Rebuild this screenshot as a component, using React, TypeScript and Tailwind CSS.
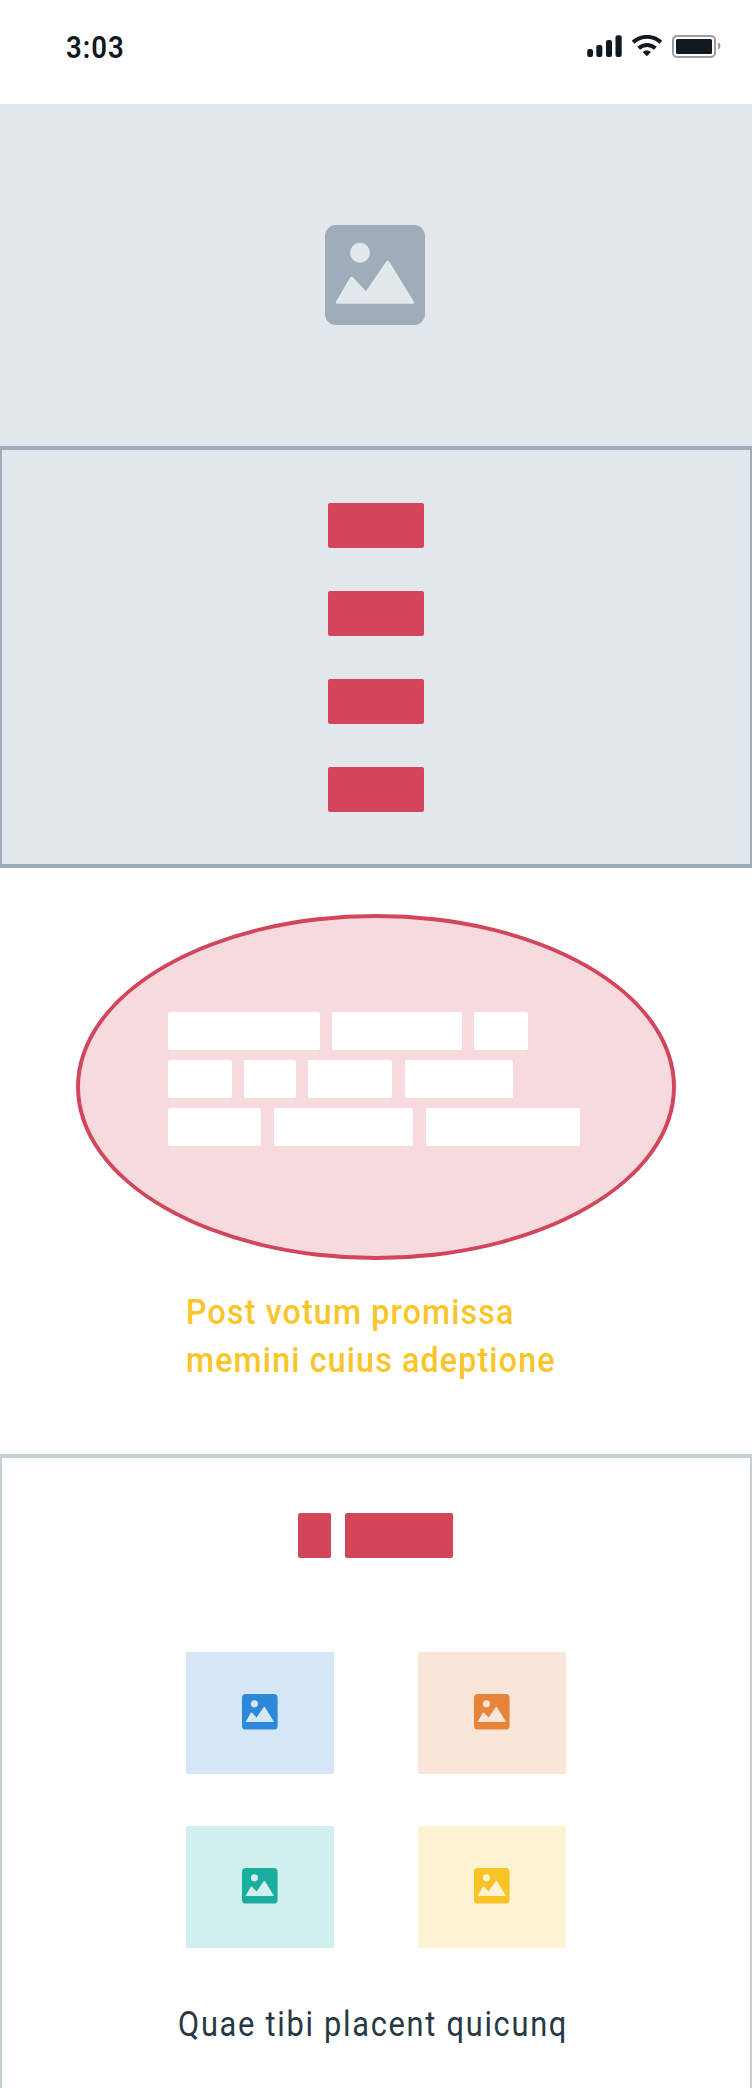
import type { ReactNode } from "react";

function PictureIcon({ className }: { className: string }) {
  return (
    <svg viewBox="0 0 100 100" className={className} fill="currentColor" aria-hidden="true">
      <path
        fillRule="evenodd"
        d="M11 0H89A11 11 0 0 1 100 11V89A11 11 0 0 1 89 100H11A11 11 0 0 1 0 89V11A11 11 0 0 1 11 0ZM35 17.7A10 10 0 1 0 35 37.7A10 10 0 1 0 35 17.7ZM25.3 52.3L11 76.5Q10 78.7 12.3 78.7H87.7Q90 78.7 88.8 76.5L64.2 36.6Q62.7 34.8 61.2 36.6L40.9 66.3L28.3 52.6Q26.8 51 25.3 52.3Z"
      />
    </svg>
  );
}

function SignalIcon() {
  return (
    <svg width="36" height="24" viewBox="0 0 36 24" fill="#101820" aria-hidden="true">
      <rect x="0.2" y="14" width="5.8" height="8" rx="2" />
      <rect x="9.3" y="10" width="6" height="12" rx="2" />
      <rect x="19" y="5" width="6" height="17" rx="2" />
      <rect x="28.5" y="0.3" width="6.2" height="21.7" rx="2" />
    </svg>
  );
}

function WifiIcon() {
  return (
    <svg width="30" height="24" viewBox="0 0 30 24" fill="none" stroke="#101820" aria-hidden="true">
      <path d="M1.2 7.2A20.5 20.5 0 0 1 28.8 7.2" strokeWidth="4" />
      <path d="M6.7 13.2A12.2 12.2 0 0 1 23.3 13.2" strokeWidth="4" />
      <path d="M10.6 16.9Q14.8 13.6 19 16.9L14.8 21.2Z" fill="#101820" stroke="none" />
    </svg>
  );
}

function BatteryIcon() {
  return (
    <svg width="49" height="24" viewBox="0 0 49 24" aria-hidden="true">
      <rect x="1" y="1" width="42" height="21" rx="4" fill="none" stroke="#9f9b9e" strokeWidth="2" />
      <rect x="4" y="4" width="36" height="15" rx="1.5" fill="#101820" />
      <path d="M46 7Q48.5 8.5 48.5 11T46 15Z" fill="#9f9b9e" />
    </svg>
  );
}

function StatusBar() {
  return (
    <header className="flex h-[104px] shrink-0 items-start justify-between bg-white pt-[27px] pr-[31px] pl-[66px]">
      <span className="inline-block origin-left scale-x-[0.86] text-[32px] leading-[40px] font-semibold tracking-[1.2px] text-[#101820]">
        3:03
      </span>
      <div className="flex pt-2">
        <SignalIcon />
        <div className="pr-[10px] pl-[9px]">
          <WifiIcon />
        </div>
        <BatteryIcon />
      </div>
    </header>
  );
}

function Tile({ className }: { className: string }) {
  return (
    <div className={`flex h-[122px] w-[148px] items-center justify-center pb-[2px] ${className}`}>
      <PictureIcon className="size-[35.6px]" />
    </div>
  );
}

function BrickRow({ children }: { children: ReactNode }) {
  return <div className="flex h-[38px]">{children}</div>;
}

export default function App() {
  return (
    <main className="flex h-[2088px] w-[752px] flex-col overflow-hidden bg-white font-['Roboto',sans-serif]">
      <StatusBar />

      <section className="flex h-[342px] shrink-0 justify-center bg-[#e2e8eb] pt-[121px] pr-[2px]">
        <PictureIcon className="size-[100px] text-[#9eadb9]" />
      </section>

      <section className="flex h-[422px] shrink-0 flex-col items-center gap-[43px] border-x-2 border-y-4 border-[#9eadbb] bg-[#e2e8eb] pt-[53px]">
        <div className="h-[45px] w-[95.4px] rounded-[2px] bg-[#d3455b]" />
        <div className="h-[45px] w-[95.4px] rounded-[2px] bg-[#d3455b]" />
        <div className="h-[45px] w-[95.4px] rounded-[2px] bg-[#d3455b]" />
        <div className="h-[45px] w-[95.4px] rounded-[2px] bg-[#d3455b]" />
      </section>

      <section className="flex shrink-0 flex-col items-center pt-[46px]">
        <div className="flex h-[346px] w-[600px] flex-col gap-[10px] rounded-[50%] border-4 border-[#d3455b] bg-[#f6dade] pt-[94px] pl-[88px]">
          <BrickRow>
            <div className="w-[151.6px] rounded-[2px] bg-white" />
            <div className="ml-[12.5px] w-[129.5px] rounded-[2px] bg-white" />
            <div className="ml-[12.4px] w-[54px] rounded-[2px] bg-white" />
          </BrickRow>
          <BrickRow>
            <div className="w-[64px] rounded-[2px] bg-white" />
            <div className="ml-[12.4px] w-[51.6px] rounded-[2px] bg-white" />
            <div className="ml-[12.3px] w-[84px] rounded-[2px] bg-white" />
            <div className="ml-[12.7px] w-[108px] rounded-[2px] bg-white" />
          </BrickRow>
          <BrickRow>
            <div className="w-[93px] rounded-[2px] bg-white" />
            <div className="ml-[12.6px] w-[139.6px] rounded-[2px] bg-white" />
            <div className="ml-[12.8px] w-[154px] rounded-[2px] bg-white" />
          </BrickRow>
        </div>
      </section>

      <p className="mt-[29px] h-24 shrink-0 pl-[186px] text-[35px] leading-[48px] font-medium tracking-[1.25px] whitespace-nowrap text-[#f9c529]">
        <span className="inline-block origin-left scale-x-[0.92]">Post votum promissa</span>
        <br />
        <span className="inline-block origin-left scale-x-[0.92]">memini cuius adeptione</span>
      </p>

      <section className="mt-[69px] flex h-[700px] shrink-0 flex-col border-x-2 border-t-4 border-[#c4d0dc] pt-[55px]">
        <div className="flex gap-[14px] pl-[296px]">
          <div className="h-[45px] w-[33px] rounded-[2px] bg-[#d3455b]" />
          <div className="h-[45px] w-[108.3px] rounded-[2px] bg-[#d3455b]" />
        </div>
        <div className="mt-[94px] grid grid-cols-[148px_148px] justify-center gap-x-[84px] gap-y-[52px]">
          <Tile className="bg-[#d5e6f6] text-[#2c88d9]" />
          <Tile className="bg-[#f9e6d8] text-[#e8833a]" />
          <Tile className="bg-[#d1efec] text-[#1aae9f]" />
          <Tile className="bg-[#fdf2d2] text-[#f7c325]" />
        </div>
        <p className="mt-[53px] pl-[176px] text-[35px] leading-[48px] tracking-[1.95px] whitespace-nowrap text-[#273746]">
          <span className="inline-block origin-left scale-x-[0.88]">Quae tibi placent quicunq</span>
        </p>
      </section>
    </main>
  );
}
